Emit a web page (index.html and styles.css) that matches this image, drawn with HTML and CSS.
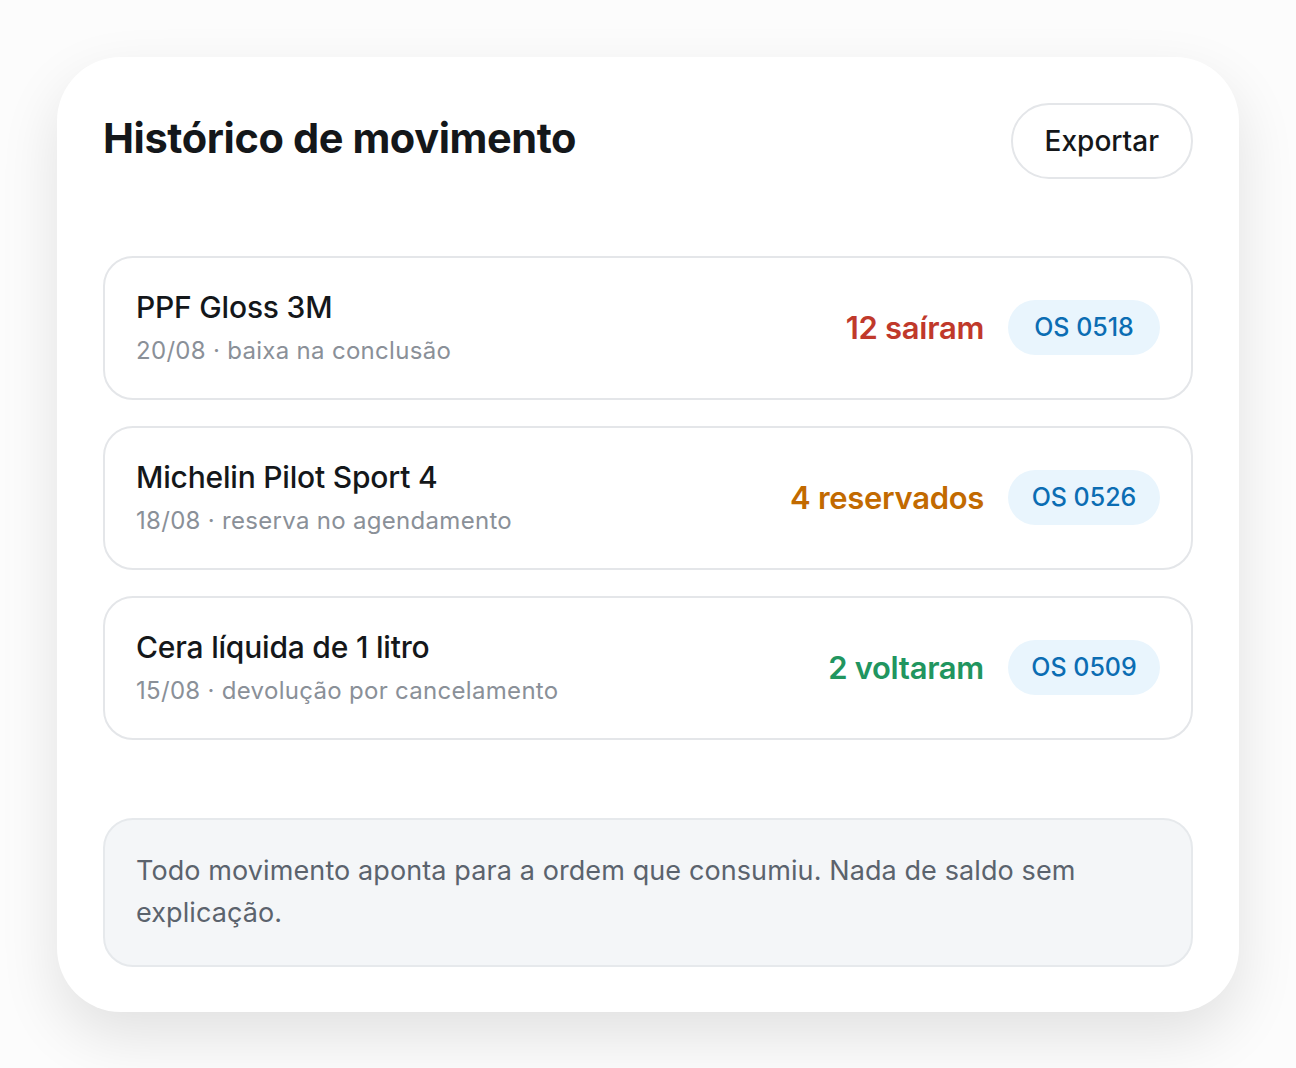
FILE: index.html
```html
<!DOCTYPE html>
<html lang="pt-BR">
<head>
  <meta charset="UTF-8">
  <meta name="viewport" content="width=device-width, initial-scale=1.0">
  <title>Histórico de movimento</title>
  <link rel="stylesheet" href="styles.css">
</head>
<body>
  <section class="card">
    <header class="card-header">
      <h1>Histórico de movimento</h1>
      <button type="button" class="btn-outline">Exportar</button>
    </header>

    <ul class="moves">
      <li class="move">
        <div class="move-info">
          <div class="move-name">PPF Gloss 3M</div>
          <div class="move-meta">20/08 · baixa na conclusão</div>
        </div>
        <div class="move-side">
          <span class="qty qty-out">12 saíram</span>
          <span class="order-tag">OS 0518</span>
        </div>
      </li>
      <li class="move">
        <div class="move-info">
          <div class="move-name">Michelin Pilot Sport 4</div>
          <div class="move-meta">18/08 · reserva no agendamento</div>
        </div>
        <div class="move-side">
          <span class="qty qty-reserved">4 reservados</span>
          <span class="order-tag">OS 0526</span>
        </div>
      </li>
      <li class="move">
        <div class="move-info">
          <div class="move-name">Cera líquida de 1 litro</div>
          <div class="move-meta">15/08 · devolução por cancelamento</div>
        </div>
        <div class="move-side">
          <span class="qty qty-back">2 voltaram</span>
          <span class="order-tag">OS 0509</span>
        </div>
      </li>
    </ul>

    <p class="note">Todo movimento aponta para a ordem que consumiu. Nada de saldo sem explicação.</p>
  </section>
</body>
</html>
```

FILE: styles.css
```css
* {
  box-sizing: border-box;
}
body {
  margin: 0;
  padding: 57px;
  background: #fcfcfc;
  font-family: Inter, "Noto Sans", sans-serif;
  color: #14171a;
}
.card {
  background: #fff;
  border-radius: 64px;
  padding: 46px 46px 45px;
  box-shadow: 0 24px 60px rgba(0, 0, 0, 0.11);
}
.card-header {
  display: flex;
  justify-content: space-between;
  align-items: flex-start;
  margin-bottom: 77px;
}
h1 {
  margin: 11px 0 0;
  font-size: 41.5px;
  font-weight: 700;
  letter-spacing: -0.4px;
  line-height: 48px;
}
.btn-outline {
  height: 76px;
  padding: 0 32px;
  background: #fff;
  border: 2px solid #e4e6e9;
  border-radius: 38px;
  font-family: inherit;
  font-size: 28px;
  font-weight: 500;
  color: #14171a;
}
.moves {
  list-style: none;
  margin: 0;
  padding: 0;
  display: flex;
  flex-direction: column;
  gap: 26px;
}
.move {
  display: flex;
  justify-content: space-between;
  align-items: center;
  padding: 29px 31px 31px;
  border: 2px solid #e4e6e9;
  border-radius: 30px;
}
.move-name {
  font-size: 30px;
  font-weight: 500;
  line-height: 40px;
  letter-spacing: -0.2px;
}
.move-meta {
  margin-top: 8px;
  font-size: 24px;
  line-height: 32px;
  letter-spacing: 0.3px;
  color: #8a9098;
}
.move-side {
  display: flex;
  align-items: center;
  gap: 24px;
}
.qty {
  font-size: 31px;
  font-weight: 600;
  letter-spacing: -0.3px;
}
.qty-out {
  color: #c0392b;
}
.qty-reserved {
  color: #c26a00;
}
.qty-back {
  color: #21955f;
}
.order-tag {
  display: inline-block;
  width: 152px;
  height: 55px;
  line-height: 55px;
  text-align: center;
  border-radius: 28px;
  background: #e9f5fd;
  color: #0b6db3;
  font-size: 25px;
  font-weight: 500;
}
.note {
  margin: 78px 0 0;
  padding: 30px 31px 31px;
  background: #f4f6f8;
  border: 2px solid #e6e9ec;
  border-radius: 30px;
  font-size: 27px;
  line-height: 42px;
  letter-spacing: 0.1px;
  color: #5b636d;
}
```
